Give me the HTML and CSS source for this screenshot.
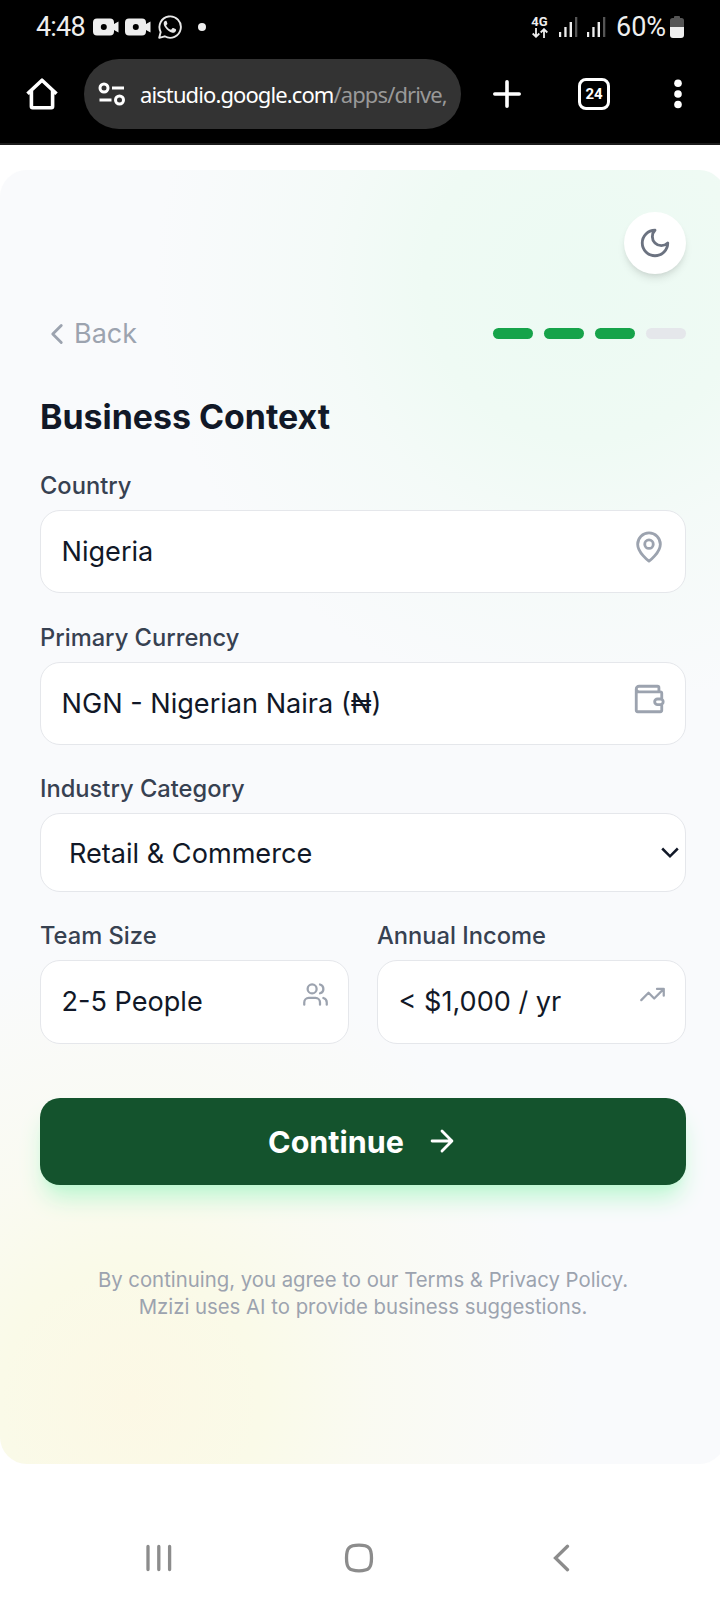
FILE: index.html
```html
<!DOCTYPE html>
<html lang="en">
<head>
<meta charset="utf-8">
<title>Business Context</title>
<link rel="stylesheet" href="styles.css">
</head>
<body>
<div class="screen">
  <header class="chrome">
    <div class="status">
      <span class="clock">4:48</span>
      <svg class="cam" width="26" height="18" viewBox="0 0 26 18"><path fill="#eee" fill-rule="evenodd" d="M4 .5h13a4 4 0 0 1 4 4V6l4.5-2.5v11L21 12v1.5a4 4 0 0 1-4 4H4a4 4 0 0 1-4-4v-9a4 4 0 0 1 4-4zm6.8 5.5a3 3 0 1 0 0 6 3 3 0 0 0 0-6z"/></svg>
      <svg class="cam" width="26" height="18" viewBox="0 0 26 18"><path fill="#eee" fill-rule="evenodd" d="M4 .5h13a4 4 0 0 1 4 4V6l4.5-2.5v11L21 12v1.5a4 4 0 0 1-4 4H4a4 4 0 0 1-4-4v-9a4 4 0 0 1 4-4zm6.8 5.5a3 3 0 1 0 0 6 3 3 0 0 0 0-6z"/></svg>
      <svg class="whatsapp" width="24" height="24" viewBox="0 0 24 24"><path fill="none" stroke="#e8e8e8" stroke-width="1.9" stroke-linejoin="round" d="M1.2 22.8l1.5-5.7A10.7 10.7 0 1 1 6.7 21.3z"/><path fill="#e8e8e8" d="M8.6 6.2c-.4-.8-1.5-.6-2.1.1-1.4 1.6-.9 3.9.6 6 2 2.9 4.3 4.7 7.3 5.4 1.7.3 3.5-.7 3.7-2.5.1-.6-.1-.8-.6-1.1l-2.2-1c-.5-.2-.8-.1-1.1.3l-.9 1.1c-.3.3-.6.3-1 .1-1.8-.8-3.1-2-4-3.6-.2-.4-.1-.6.2-.9l.7-.9c.2-.3.2-.5.1-.9z"/></svg>
      <span class="dot"></span>
      <span class="net"><span class="net-label">4G</span><svg width="16" height="10" viewBox="0 0 16 10" fill="none" stroke="#eee" stroke-width="1.8"><path d="M4 0v8.500M.7 5.500L4 8.800l3.300-3.300M12 10V1.500M8.700 4.500L12 1.200l3.300 3.300"/></svg></span>
      <svg class="signal" width="19" height="20" viewBox="0 0 19 20"><path fill="#eee" d="M0 15h2.200v5H0zM5.300 10h2.300v10H5.300zM10.600 5h2.400v15h-2.400z"/><path fill="#555" d="M16 0h2.300v20H16z"/></svg>
      <svg class="signal second" width="19" height="20" viewBox="0 0 19 20"><path fill="#eee" d="M0 15h2.200v5H0zM5.300 10h2.300v10H5.300zM10.600 5h2.400v15h-2.400z"/><path fill="#555" d="M16 0h2.300v20H16z"/></svg>
      <span class="percent">60%</span>
      <svg class="battery" width="14" height="22" viewBox="0 0 14 22"><path fill="#555" d="M4 2V1q0-1 1-1h4q1 0 1 1v1h1.500Q14 2 14 4.500V12H0V4.500Q0 2 2.500 2z"/><path fill="#eee" d="M0 11h14v8q0 3-3 3H3q-3 0-3-3z"/></svg>
    </div>
    <div class="toolbar">
      <svg class="home" width="32" height="32" viewBox="0 0 32 32" fill="none" stroke="#fff" stroke-width="3.6" stroke-linejoin="round"><path d="M1.500 15.800L16 2.200l14.500 13.600M5.400 13v15.500q0 1.200 1.200 1.200h18.800q1.200 0 1.200-1.200V13"/></svg>
      <div class="address">
        <svg class="tune" width="28" height="24" viewBox="0 0 28 24" fill="none" stroke="#fff" stroke-width="3"><circle cx="6" cy="6" r="4"/><circle cx="21.5" cy="18" r="4"/><path d="M14 6h12M1.500 18h12"/></svg>
        <span class="url"><span class="host">aistudio.google.com</span>/apps/drive,</span>
      </div>
      <svg class="plus" width="28" height="28" viewBox="0 0 28 28" stroke="#fff" stroke-width="3.6" stroke-linecap="round"><path d="M14 1.800v24.400M1.800 14h24.400"/></svg>
      <span class="tabs">24</span>
      <svg class="more" width="8" height="30" viewBox="0 0 8 30" fill="#fff"><circle cx="4" cy="4.3" r="3.8"/><circle cx="4" cy="15" r="3.8"/><circle cx="4" cy="25.5" r="3.8"/></svg>
    </div>
  </header>

  <main class="card">
    <div class="theme-row">
      <button class="theme"><svg width="34" height="34" viewBox="0 0 24 24" fill="none" stroke="#6b7280" stroke-width="2" stroke-linecap="round" stroke-linejoin="round"><path d="M12 3a6 6 0 0 0 9 9 9 9 0 1 1-9-9Z"/></svg></button>
    </div>
    <div class="nav-row">
      <a class="back"><svg width="34" height="34" viewBox="0 0 24 24" fill="none" stroke="#9ca3af" stroke-width="2" stroke-linecap="round" stroke-linejoin="round"><path d="m15 18-6-6 6-6"/></svg><span>Back</span></a>
      <div class="steps"><i class="on"></i><i class="on"></i><i class="on"></i><i></i></div>
    </div>
    <h1>Business Context</h1>
    <div class="form">
      <div class="field">
        <label>Country</label>
        <div class="input"><span>Nigeria</span><svg class="icon" width="34" height="34" viewBox="0 0 24 24"><path d="M20 10c0 6-8 12-8 12s-8-6-8-12a8 8 0 0 1 16 0Z"/><circle cx="12" cy="10" r="3"/></svg></div>
      </div>
      <div class="field currency">
        <label>Primary Currency</label>
        <div class="input"><span>NGN - Nigerian Naira (₦)</span><svg class="icon" width="34" height="34" viewBox="0 0 24 24"><path d="M19 7V4a1 1 0 0 0-1-1H5a2 2 0 0 0 0 4h15a1 1 0 0 1 1 1v3.500M21 16.500V20a1 1 0 0 1-1 1H4a1 1 0 0 1-1-1V5"/><rect x="16" y="12" width="6" height="4" rx="2"/></svg></div>
      </div>
      <div class="field industry">
        <label>Industry Category</label>
        <div class="input select"><span>Retail &amp; Commerce</span><svg width="18" height="12" viewBox="0 0 18 12" fill="none" stroke="#111827" stroke-width="2.5"><path d="M1.200 1.500L9 9.300l7.800-7.800"/></svg></div>
      </div>
      <div class="pair">
        <div class="field">
          <label>Team Size</label>
          <div class="input"><span>2-5 People</span><svg class="icon small" width="27" height="27" viewBox="0 0 24 24"><path d="M16 21v-2a4 4 0 0 0-4-4H6a4 4 0 0 0-4 4v2M22 21v-2a4 4 0 0 0-3-3.870M16 3.130a4 4 0 0 1 0 7.750"/><circle cx="9" cy="7" r="4"/></svg></div>
        </div>
        <div class="field">
          <label>Annual Income</label>
          <div class="input"><span>&lt; $1,000 / yr</span><svg class="icon small" width="27" height="27" viewBox="0 0 24 24"><path d="m22 7-8.500 8.500-5-5L2 17M16 7h6v6"/></svg></div>
        </div>
      </div>
    </div>
    <button class="continue"><span>Continue</span><svg width="34" height="34" viewBox="0 0 24 24" fill="none" stroke="#fff" stroke-width="2" stroke-linecap="round" stroke-linejoin="round"><path d="M5 12h14M12 5l7 7-7 7"/></svg></button>
    <p class="legal">By continuing, you agree to our Terms &amp; Privacy Policy.<br>Mzizi uses AI to provide business suggestions.</p>
  </main>

  <footer class="android">
    <svg class="recents" width="26" height="28" viewBox="0 0 26 28" stroke="#8c8c8c" stroke-width="3.3" stroke-linecap="round"><path d="M2 2.500v23M12.800 2.500v23M23.600 2.500v23"/></svg>
    <svg class="launcher" width="30" height="30" viewBox="0 0 30 30" fill="none" stroke="#8c8c8c" stroke-width="3.3"><path d="M15 2.200c10 0 12.500 2.800 12.500 12.800S25 27.800 15 27.800 2.500 25 2.500 15 5 2.200 15 2.200z"/></svg>
    <svg class="go-back" width="17" height="28" viewBox="0 0 17 28" fill="none" stroke="#8c8c8c" stroke-width="3.3" stroke-linecap="round"><path d="M14.500 2.300L2.500 14l12 11.700"/></svg>
  </footer>
</div>
</body>
</html>
```

FILE: styles.css
```css
* { box-sizing: border-box; }
body { margin: 0; background: #fff; }
svg { display: block; flex: none; }
button { border: 0; padding: 0; font: inherit; }

.screen {
  width: 720px;
  height: 1600px;
  overflow: hidden;
  font-family: Inter, "Noto Sans", sans-serif;
  color: #111827;
}

/* Browser chrome */
.chrome {
  height: 145px;
  background: #000;
  border-bottom: 2px solid #1c1c1c;
}
.status {
  display: flex;
  align-items: center;
  height: 53px;
  padding-left: 36px;
  color: #eee;
  font-family: Roboto, sans-serif;
}
.clock { width: 57px; font-size: 27px; letter-spacing: -0.8px; }
.cam { margin-right: 6px; }
.whatsapp { margin-left: 1px; }
.dot { width: 8px; height: 8px; margin-left: 16px; border-radius: 50%; background: #eee; }
.net { display: flex; flex-direction: column; align-items: center; width: 17px; margin-left: 325px; }
.net-label { font: 700 13px/12px Roboto, sans-serif; }
.signal { margin-left: 11px; }
.signal.second { margin-left: 9px; }
.percent { width: 54px; margin-left: 10px; font-size: 27px; letter-spacing: 0; }
.toolbar { display: flex; align-items: center; height: 82px; padding: 0 0 0 26px; }
.address {
  display: flex;
  align-items: center;
  width: 377px;
  height: 70px;
  margin-left: 26px;
  padding-left: 14px;
  border-radius: 35px;
  background: #333;
}
.url {
  width: 312px;
  margin-left: 14px;
  overflow: hidden;
  white-space: nowrap;
  color: #999;
  font: 22px/32px "Noto Sans", sans-serif;
  letter-spacing: -0.9px;
}
.host { color: #fff; }
.plus { margin-left: 32px; }
.tabs {
  width: 32px;
  height: 32px;
  margin-left: 57px;
  border: 3px solid #fff;
  border-radius: 8px;
  color: #fff;
  font: 700 15px/26px Roboto, sans-serif;
  text-align: center;
}
.more { margin-left: 64px; }

/* App card */
.card {
  width: 726px;
  height: 1294px;
  margin-top: 25px;
  padding: 42px 40px 0;
  border-radius: 27px;
  background:
    radial-gradient(circle at 585px 110px, #ecfaf3 0, #effaf4 160px, rgba(243, 250, 247, .8) 260px, rgba(249, 250, 251, 0) 430px),
    radial-gradient(circle at 130px 1230px, #fcf8e5 0, #fafae8 130px, rgba(250, 250, 239, .8) 240px, rgba(249, 250, 251, 0) 450px),
    #f9fafc;
}
.theme-row { display: flex; justify-content: flex-end; }
.theme {
  display: grid;
  place-items: center;
  width: 62px;
  height: 62px;
  border-radius: 50%;
  background: #fff;
  box-shadow: 0 6px 10px -2px rgba(0, 0, 0, .11), 0 3px 6px -3px rgba(0, 0, 0, .1);
}
.nav-row { display: flex; align-items: center; justify-content: space-between; height: 40px; margin-top: 39.5px; }
.back { display: flex; align-items: center; color: #9ca3af; font-size: 27px; line-height: 40px; }
.steps { display: flex; gap: 11px; }
.steps i { width: 40px; height: 10.5px; border-radius: 6px; background: #e5e7eb; }
.steps .on { background: #16a34a; }
h1 { margin: 43px 0 32px; font-size: 33.9px; line-height: 40px; font-weight: 700; }
.form { display: grid; gap: 27px; }
.field { display: grid; gap: 7.5px; }
.currency { margin-top: 1px; gap: 7px; }
label { color: #374151; font-size: 23.7px; font-weight: 500; line-height: 34px; }
.input {
  display: flex;
  align-items: center;
  justify-content: space-between;
  height: 83px;
  padding: 0 19px 0 20.5px;
  border: 1px solid #e5e7eb;
  border-radius: 20px;
  background: #fff;
  font-size: 27.1px;
  white-space: nowrap;
}
.icon { margin-bottom: 9px; fill: none; stroke: #9ca3af; stroke-width: 2; stroke-linecap: round; stroke-linejoin: round; }
.icon.small { margin-bottom: 14px; }
.industry, .pair .field { gap: 7px; }
.industry { margin-top: -0.5px; }
.select { height: 79px; padding: 2px 6px 0 28px; }
.pair { display: grid; grid-template-columns: 1fr 1fr; gap: 28px; }
.pair .input { height: 84px; }
.continue {
  display: flex;
  align-items: center;
  justify-content: center;
  gap: 21px;
  width: 646px;
  height: 87.5px;
  margin-top: 54px;
  padding-left: 1px;
  border-radius: 20px;
  background: #14532d;
  color: #fff;
  font-size: 30.5px;
  font-weight: 700;
  box-shadow: 0 17px 25px -5px #bbf7d0, 0 7px 10px -7px #bbf7d0;
}
.legal { margin: 81px 0 0; color: #9ca3af; font-size: 20.33px; line-height: 27px; text-align: center; }

/* Android navigation */
.android { display: flex; align-items: flex-start; height: 136px; padding: 76.5px 0 0 145.5px; }
.launcher { margin: 2px 0 0 172.5px; }
.recents, .go-back { margin-top: 3px; }
.go-back { margin-left: 178.5px; }
```
